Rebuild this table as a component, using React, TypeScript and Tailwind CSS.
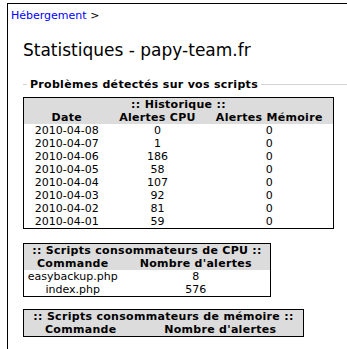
const historique = [
  { date: '2010-04-08', cpu: 0, mem: 0 },
  { date: '2010-04-07', cpu: 1, mem: 0 },
  { date: '2010-04-06', cpu: 186, mem: 0 },
  { date: '2010-04-05', cpu: 58, mem: 0 },
  { date: '2010-04-04', cpu: 107, mem: 0 },
  { date: '2010-04-03', cpu: 92, mem: 0 },
  { date: '2010-04-02', cpu: 81, mem: 0 },
  { date: '2010-04-01', cpu: 59, mem: 0 },
];

const scriptsCpu = [
  { commande: 'easybackup.php', alertes: 8 },
  { commande: 'index.php', alertes: 576 },
];

export default function App() {
  return (
    <div
      className="h-[349px] w-full overflow-hidden pt-[3px] pl-[7px] text-[11px] leading-[13px] text-black bg-white"
      style={{ fontFamily: '"DejaVu Sans", Verdana, sans-serif' }}
    >
      <div className="h-[346px] border-l border-t border-black pl-[3px] pt-[5px]">
        {/* Fil d'ariane */}
        <div>
          <a href="#" className="text-[#0000ff]">Hébergement</a> &gt;
        </div>

        <h1 className="ml-[12px] mt-[17px] text-[17px] leading-[22px] font-normal">
          Statistiques - papy-team.fr
        </h1>

        <fieldset className="ml-[12px] mt-[17px] border-t border-[#d4d4d4]">
          <legend className="ml-[4px] px-[3px] font-bold tracking-[0.3px]">Problèmes détectés sur vos scripts</legend>

          {/* Historique */}
          <table className="mt-[6px] w-[311px] border border-black">
            <thead className="bg-[#dcdcdc] font-bold tracking-[0.3px]">
              <tr>
                <th colSpan={3} className="p-0 text-center">:: Historique ::</th>
              </tr>
              <tr>
                <th className="w-[86px] p-0 text-center">Date</th>
                <th className="w-[96px] p-0 text-center">Alertes CPU</th>
                <th className="p-0 text-center">Alertes Mémoire</th>
              </tr>
            </thead>
            <tbody>
              {historique.map((row) => (
                <tr key={row.date}>
                  <td className="p-0 text-center">{row.date}</td>
                  <td className="p-0 text-center">{row.cpu}</td>
                  <td className="p-0 text-center">{row.mem}</td>
                </tr>
              ))}
            </tbody>
          </table>

          {/* Scripts CPU */}
          <table className="mt-[14px] w-[248px] border border-black">
            <thead className="bg-[#dcdcdc] font-bold tracking-[0.3px]">
              <tr>
                <th colSpan={2} className="p-0 text-center">:: Scripts consommateurs de CPU ::</th>
              </tr>
              <tr>
                <th className="w-[98px] p-0 text-center">Commande</th>
                <th className="p-0 text-center">Nombre d'alertes</th>
              </tr>
            </thead>
            <tbody>
              {scriptsCpu.map((row) => (
                <tr key={row.commande}>
                  <td className="p-0 text-center">{row.commande}</td>
                  <td className="p-0 text-center">{row.alertes}</td>
                </tr>
              ))}
            </tbody>
          </table>

          {/* Scripts mémoire */}
          <table className="mt-[12px] w-[281px] border border-black">
            <thead className="bg-[#dcdcdc] font-bold tracking-[0.3px]">
              <tr>
                <th colSpan={2} className="p-0 text-center">:: Scripts consommateurs de mémoire ::</th>
              </tr>
              <tr>
                <th className="w-[114px] p-0 text-center">Commande</th>
                <th className="p-0 text-center">Nombre d'alertes</th>
              </tr>
            </thead>
          </table>
        </fieldset>
      </div>
    </div>
  );
}
